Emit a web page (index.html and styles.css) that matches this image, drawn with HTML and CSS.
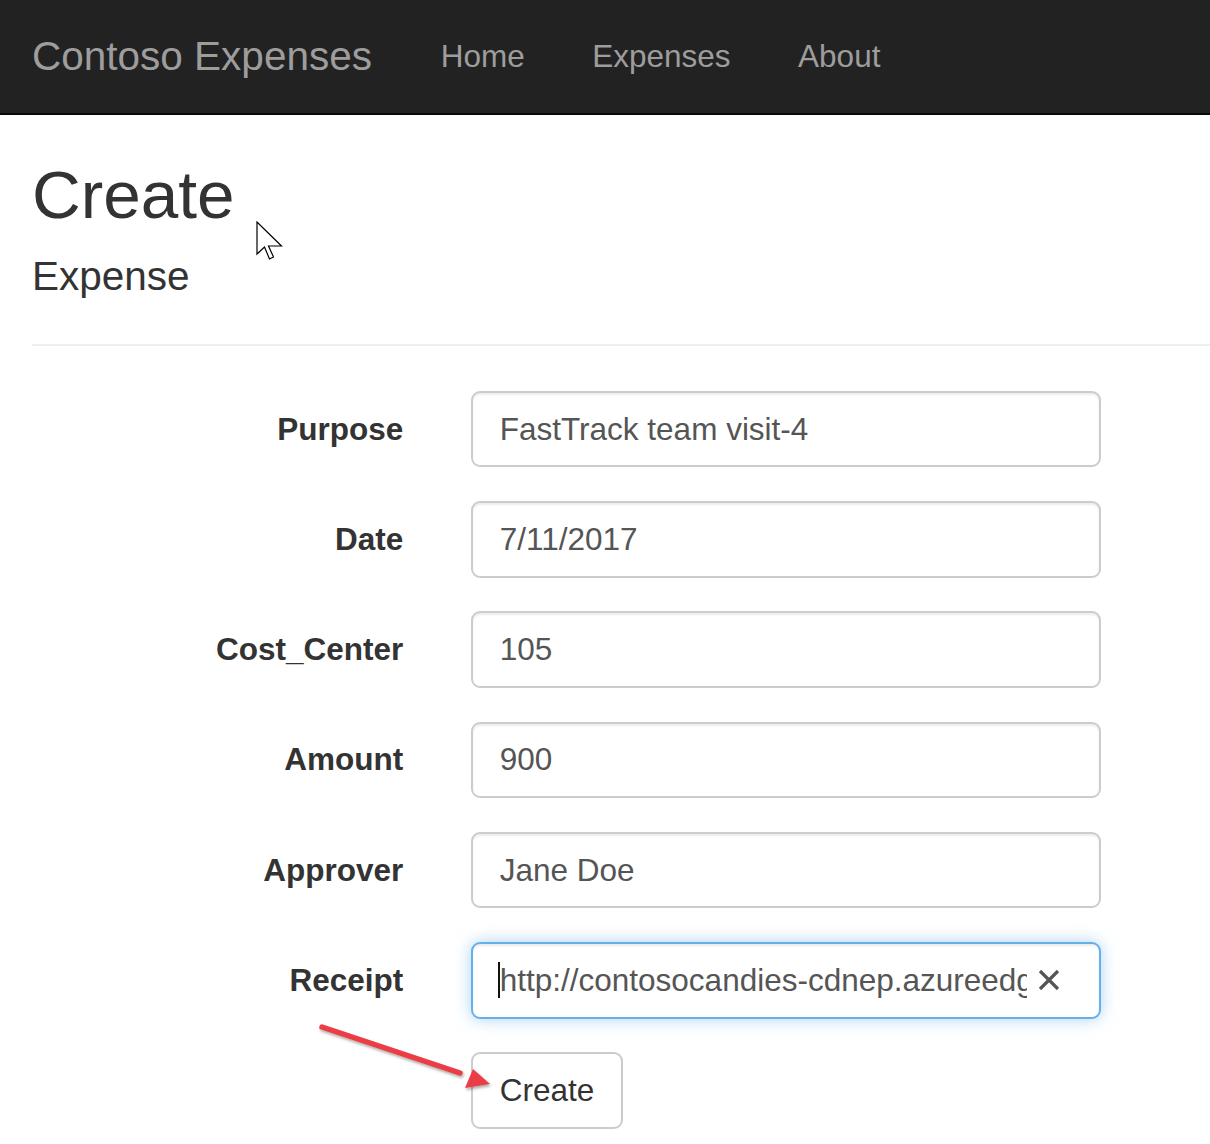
FILE: index.html
```html
<!DOCTYPE html>
<html lang="en">
<head>
<meta charset="utf-8">
<title>Create - Contoso Expenses</title>
<link rel="stylesheet" href="styles.css">
</head>
<body>
<nav class="navbar">
  <a class="brand" href="#">Contoso Expenses</a>
  <ul class="nav">
    <li><a href="#">Home</a></li>
    <li><a href="#">Expenses</a></li>
    <li><a href="#">About</a></li>
  </ul>
</nav>
<main class="content">
  <h2 class="title">Create</h2>
  <h4 class="subtitle">Expense</h4>
  <hr class="rule">
  <form class="form">
    <div class="group">
      <label class="label">Purpose</label>
      <input class="control" type="text" value="FastTrack team visit-4">
    </div>
    <div class="group">
      <label class="label">Date</label>
      <input class="control" type="text" value="7/11/2017">
    </div>
    <div class="group">
      <label class="label">Cost_Center</label>
      <input class="control" type="text" value="105">
    </div>
    <div class="group">
      <label class="label">Amount</label>
      <input class="control" type="text" value="900">
    </div>
    <div class="group">
      <label class="label">Approver</label>
      <input class="control" type="text" value="Jane Doe">
    </div>
    <div class="group">
      <label class="label">Receipt</label>
      <div class="control focused">
        <span class="caret"></span>
        <span class="field-text">http://contosocandies-cdnep.azureedge.net/receipts/fasttrack-team-visit-4.jpg</span>
        <svg class="clear" width="24" height="24" viewBox="0 0 24 24"><path d="M3 3 L21 21 M21 3 L3 21" stroke="#555" stroke-width="3.2" fill="none"/></svg>
      </div>
    </div>
    <div class="group actions">
      <button class="btn" type="button">Create</button>
    </div>
  </form>
</main>
<svg class="arrow" width="200" height="90" viewBox="0 0 200 90">
  <defs>
    <filter id="sh" x="-20%" y="-40%" width="140%" height="180%">
      <feDropShadow dx="1" dy="2" stdDeviation="1.6" flood-color="#000" flood-opacity="0.35"/>
    </filter>
  </defs>
  <g filter="url(#sh)">
    <line x1="22" y1="17" x2="160" y2="63" stroke="#ea3e44" stroke-width="5.5" stroke-linecap="round"/>
    <polygon points="190,74 165,78 173,59" fill="#ea3e44"/>
  </g>
</svg>
<svg class="cursor" width="30" height="42" viewBox="0 0 30 42">
  <path d="M1 1 L1 33 L8.5 26 L13.5 38 L17.5 36 L12.5 25 L25.5 25 Z" fill="#fff" stroke="#000" stroke-width="1.2" stroke-linejoin="miter"/>
</svg>
</body>
</html>
```
FILE: styles.css
```css
html, body {
  margin: 0;
  padding: 0;
  background: #fff;
}
body {
  font-family: "Liberation Sans", Arial, sans-serif;
  color: #333;
  overflow: hidden;
  position: relative;
  min-height: 1144px;
}
.navbar {
  display: flex;
  align-items: stretch;
  height: 113px;
  background: #222;
  border-bottom: 2px solid #080808;
}
.brand {
  display: block;
  padding: 33.75px 33.75px 33.75px 32px;
  font-size: 40.5px;
  line-height: 45px;
  color: #9d9d9d;
  text-decoration: none;
}
.nav {
  display: flex;
  list-style: none;
  margin: 0;
  padding: 0;
}
.nav a {
  display: block;
  padding: 33.75px 33.75px;
  font-size: 31.5px;
  line-height: 45px;
  color: #9d9d9d;
  text-decoration: none;
}
.nav li:first-child a {
  padding-left: 35px;
}
.content {
  padding: 0 0 0 32px;
}
.title {
  margin: 42.5px 0 22.5px;
  font-size: 67.5px;
  line-height: 1.1;
  font-weight: 500;
  color: #333;
}
.subtitle {
  margin: 22.5px 0 22.5px;
  font-size: 40.5px;
  line-height: 1.1;
  font-weight: 500;
  color: #333;
}
.rule {
  margin: 45px 0 45px;
  border: 0;
  border-top: 2.25px solid #eee;
  height: 0;
}
.form {
  margin: 0;
}
.group {
  display: flex;
  align-items: flex-start;
  gap: 67.5px;
  margin-bottom: 33.75px;
}
.label {
  width: 371.25px;
  flex: none;
  text-align: right;
  padding-top: 15.75px;
  font-size: 31.5px;
  line-height: 45px;
  font-weight: bold;
  color: #333;
}
.control {
  box-sizing: border-box;
  width: 630px;
  height: 76.5px;
  padding: 13.5px 27px;
  font-family: "Liberation Sans", Arial, sans-serif;
  font-size: 31.5px;
  line-height: 45px;
  color: #555;
  background: #fff;
  border: 2.25px solid #ccc;
  border-radius: 9px;
  box-shadow: inset 0 2px 2px rgba(0,0,0,.075);
  outline: none;
  margin: 0;
}
.focused {
  position: relative;
  display: flex;
  align-items: center;
  border-color: #66afe9;
  box-shadow: inset 0 2px 2px rgba(0,0,0,.075), 0 0 16px rgba(102,175,233,.55);
}
.field-text {
  display: block;
  width: 527px;
  overflow: hidden;
  white-space: nowrap;
  line-height: 45px;
}
.caret {
  position: absolute;
  left: 25.5px;
  top: 18px;
  width: 2px;
  height: 36px;
  background: #111;
}
.clear {
  flex: none;
  margin-left: 10px;
}
.actions {
  padding-left: 438.75px;
}
.btn {
  box-sizing: border-box;
  height: 76.5px;
  padding: 13.5px 27px;
  font-family: "Liberation Sans", Arial, sans-serif;
  font-size: 31.5px;
  line-height: 45px;
  color: #333;
  background: #fff;
  border: 2.25px solid #ccc;
  border-radius: 9px;
  margin: 0;
}
.arrow {
  position: absolute;
  left: 300px;
  top: 1010px;
}
.cursor {
  position: absolute;
  left: 256px;
  top: 221px;
}
```
